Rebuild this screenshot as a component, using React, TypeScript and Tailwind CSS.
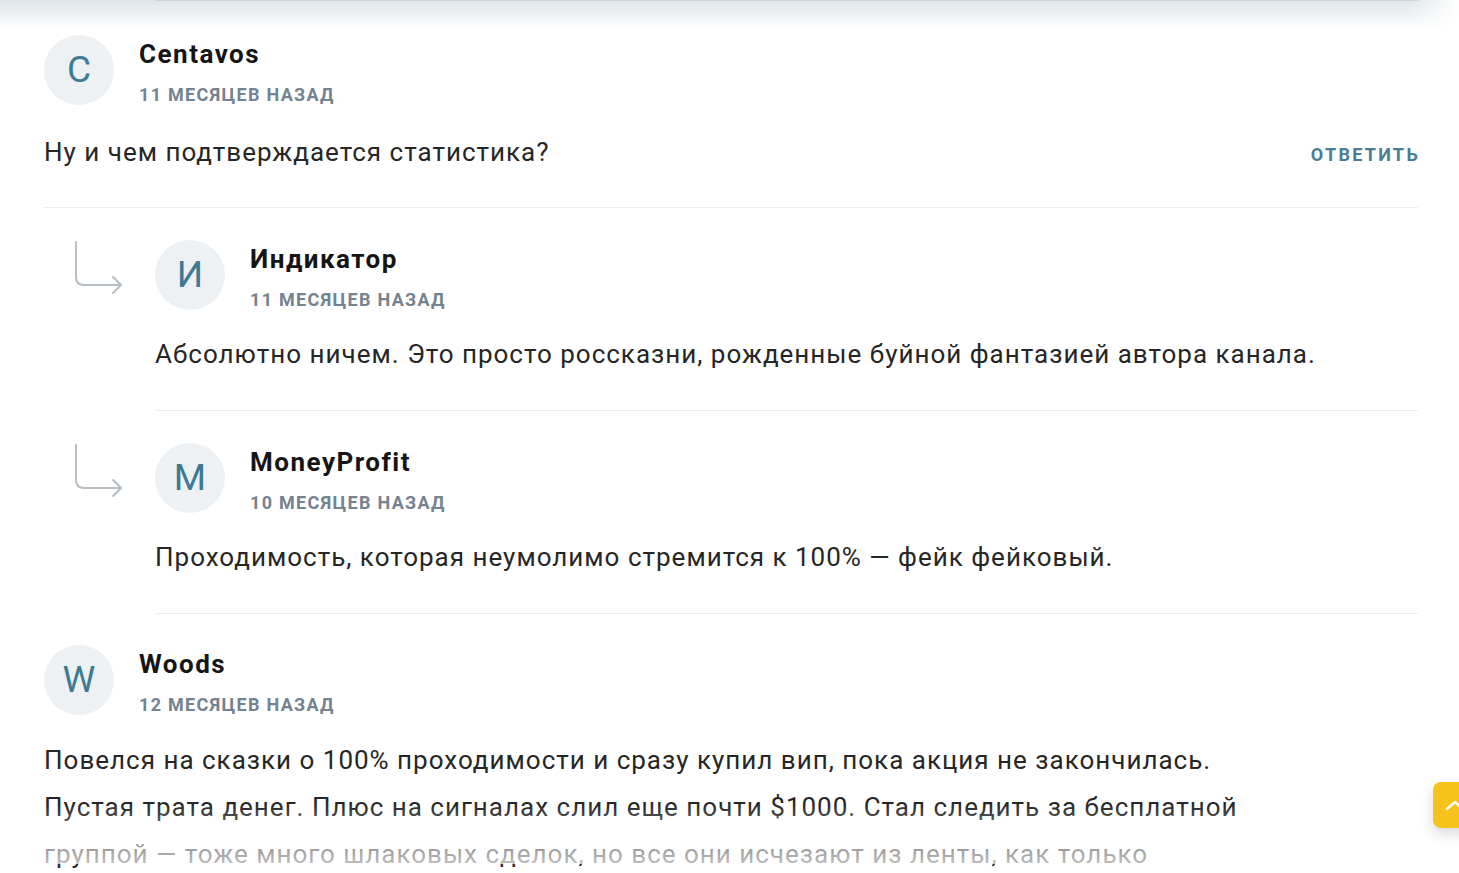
import React from "react";

type CommentProps = {
  letter: string;
  name: string;
  date: string;
  children: React.ReactNode;
  reply?: boolean;
  showAnswer?: boolean;
  last?: boolean;
};

const ReplyArrow = () => (
  <svg width="50" height="56" viewBox="0 0 50 56" fill="none" className="text-[#b5bec5]">
    <path d="M2 1 V36 Q2 44 10 44 H47" stroke="currentColor" strokeWidth="2" strokeLinecap="round" />
    <path d="M39 36 L47 44 L39 52" stroke="currentColor" strokeWidth="2" strokeLinecap="round" strokeLinejoin="round" />
  </svg>
);

const Comment: React.FC<CommentProps> = ({ letter, name, date, children, reply, showAnswer, last }) => {
  // отступы немного разные у ответов и корневых комментариев
  const pad = reply ? "pt-[32px] pb-[32px]" : last ? "pt-[31px] pb-[32px]" : "pt-[33px] pb-[31px]";

  return (
    <div className="flex">
      {reply && (
        <div className="w-[111px] shrink-0 pl-[30px] pt-[33px]">
          <ReplyArrow />
        </div>
      )}
      <div className={`flex-1 ${last ? "" : "border-b border-[#eceff1]"} ${pad}`}>
        <header className="flex items-start h-[70px]">
          <div className="w-[70px] h-[70px] rounded-full bg-[#eef1f4] flex items-center justify-center text-[37px] text-[#3d7a95] shrink-0">
            {letter}
          </div>
          <div className="ml-[25px] flex flex-col pt-[2px]">
            <h3 className="text-[26px] leading-[34px] font-bold tracking-[1.5px] text-[#151515]">{name}</h3>
            <span className="text-[18px] leading-[24px] font-bold uppercase tracking-[1.3px] text-[#74838f] mt-[12px]">
              {date}
            </span>
          </div>
        </header>
        <div className={`flex items-start ${reply ? "mt-[21px]" : last ? "mt-[22px]" : "mt-[24px]"}`}>
          <div className="flex-1 text-[26px] leading-[47px] tracking-[1px] text-[#262626]">{children}</div>
          {showAnswer && (
            <button className="text-[18px] font-bold uppercase tracking-[2.3px] text-[#4b7c93] mt-[12px] -mr-[2px]">
              Ответить
            </button>
          )}
        </div>
      </div>
    </div>
  );
};

export default function App() {
  return (
    <div
      className="relative w-[1459px] h-[873px] overflow-hidden bg-white"
      style={{ fontFamily: "Roboto, 'Noto Sans', sans-serif" }}
    >
      <div className="h-[2px] bg-gradient-to-b from-[#dde4e9] to-[#e4e9ed]">
        <div className="ml-[155px] mr-[40px] h-[3px] bg-[#c9d3da]" />
      </div>
      <div className="h-[28px] bg-gradient-to-b from-[#dfe6ea] to-white -mt-px" />
      <div className="absolute right-0 top-0 w-[50px] h-[30px] bg-gradient-to-r from-white/0 to-white" />

      <div className="pl-[44px] pr-[41px] -mt-[27px]">
        <Comment letter="C" name="Centavos" date="11 месяцев назад" showAnswer>
          Ну и чем подтверждается статистика?
        </Comment>
        <Comment letter="И" name="Индикатор" date="11 месяцев назад" reply>
          Абсолютно ничем. Это просто россказни, рожденные буйной фантазией автора канала.
        </Comment>
        <Comment letter="M" name="MoneyProfit" date="10 месяцев назад" reply>
          Проходимость, которая неумолимо стремится к 100% — фейк фейковый.
        </Comment>
        <div className="relative">
          <Comment letter="W" name="Woods" date="12 месяцев назад" last>
            Повелся на сказки о 100% проходимости и сразу купил вип, пока акция не закончилась.
            <br />
            Пустая трата денег. Плюс на сигналах слил еще почти $1000. Стал следить за бесплатной
            <br />
            группой — тоже много шлаковых сделок, но все они исчезают из ленты, как только
          </Comment>
          <div className="absolute left-0 right-0 top-[190px] h-[60px] bg-gradient-to-b from-white/0 via-white/40 to-white/70" />
        </div>
      </div>

      <button className="absolute left-[1433px] top-[782px] w-[46px] h-[46px] rounded-lg bg-[#f6c21c] shadow-[0_6px_14px_rgba(0,0,0,0.15)] flex items-center pl-[12px]">
        <svg width="20" height="12" viewBox="0 0 20 12" fill="none">
          <path d="M2 10 L10 3 L18 10" stroke="white" strokeWidth="2.5" strokeLinecap="round" strokeLinejoin="round" />
        </svg>
      </button>
    </div>
  );
}
